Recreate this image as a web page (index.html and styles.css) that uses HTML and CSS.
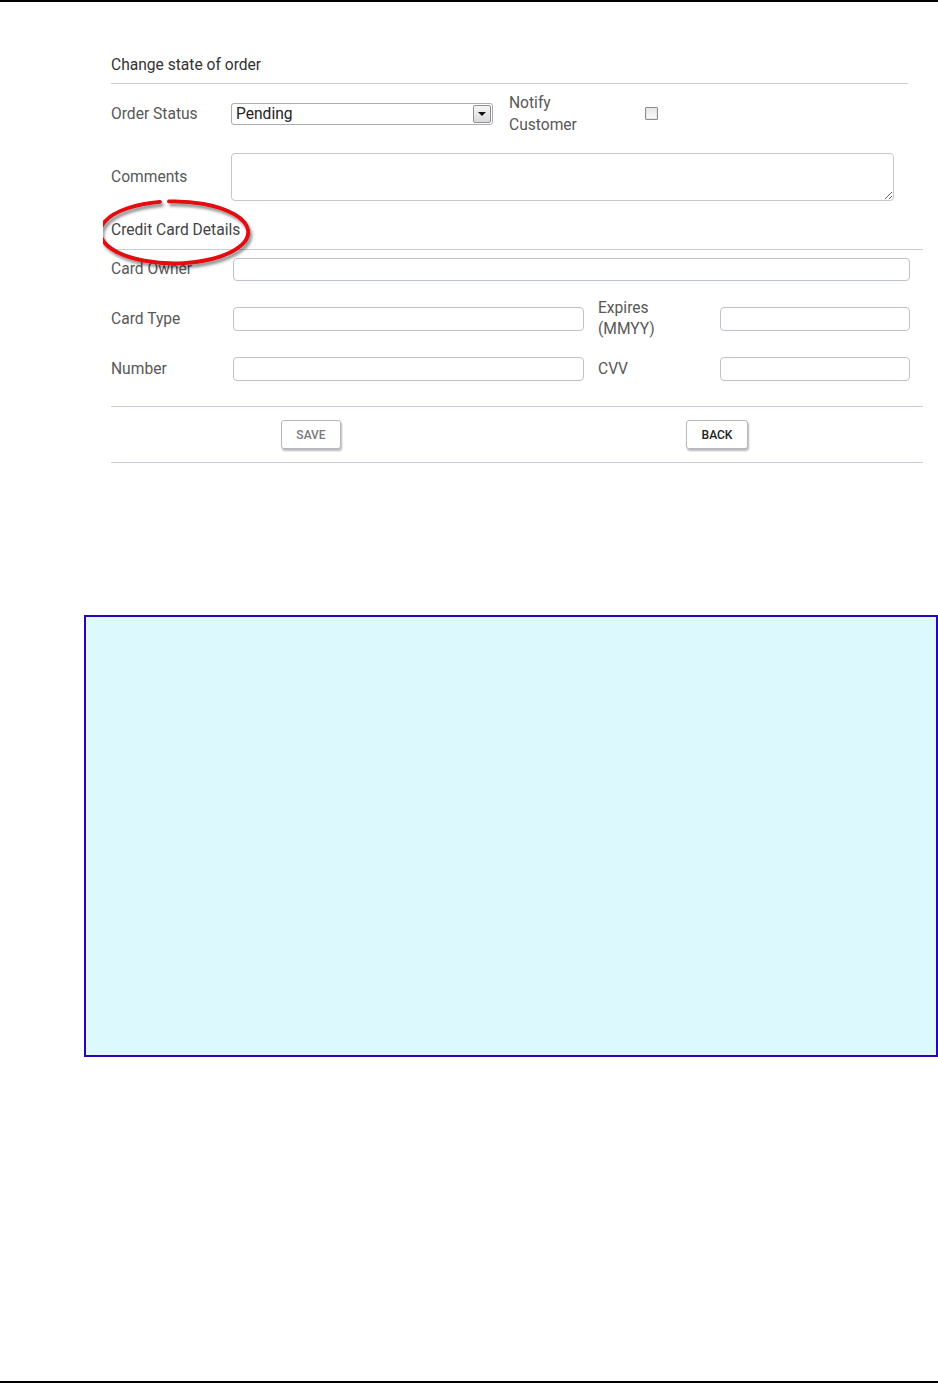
FILE: index.html
```html
<!DOCTYPE html>
<html lang="en">
<head>
  <meta charset="UTF-8">
  <meta name="viewport" content="width=device-width, initial-scale=1.0">
  <title>Change state of order</title>
  <link rel="stylesheet" href="styles.css">
</head>
<body>
  <div class="top-rule"></div>

  <form class="order-form">
    <h2 class="section-title state-title">Change state of order</h2>

    <div class="row status-row">
      <label class="field-label">Order Status</label>
      <div class="select-box">
        <select class="status-select">
          <option>Pending</option>
        </select>
        <span class="select-btn"><span class="select-arrow"></span></span>
      </div>
      <label class="notify-label">Notify<br>Customer</label>
      <input type="checkbox" class="notify-check">
    </div>

    <div class="row comments-row">
      <label class="field-label">Comments</label>
      <textarea class="comments"></textarea>
    </div>

    <div class="card-head">
      <h2 class="section-title card-title">Credit Card Details</h2>
      <!-- red marker circle drawn over the heading -->
      <svg class="marker" width="164" height="80" viewBox="0 0 164 80">
        <defs>
          <filter id="shade" x="-10%" y="-20%" width="125%" height="150%">
            <feDropShadow dx="2" dy="3" stdDeviation="1.8" flood-color="#000" flood-opacity="0.45"/>
          </filter>
        </defs>
        <path d="M 66 6.4 A 74 31 0 1 1 57 6.9" fill="none" stroke="#e3070c" stroke-width="3.8" stroke-linecap="round" filter="url(#shade)"/>
      </svg>
    </div>

    <div class="row owner-row">
      <label class="field-label card-label">Card Owner</label>
      <input type="text" class="text-input owner-input">
    </div>

    <div class="row pair-row type-row">
      <label class="field-label card-label">Card Type</label>
      <input type="text" class="text-input wide-input">
      <label class="field-label side-label">Expires<br>(MMYY)</label>
      <input type="text" class="text-input short-input">
    </div>

    <div class="row pair-row number-row">
      <label class="field-label card-label">Number</label>
      <input type="text" class="text-input wide-input">
      <label class="field-label side-label">CVV</label>
      <input type="text" class="text-input short-input">
    </div>

    <div class="button-bar">
      <div class="button-cell"><button type="button" class="btn btn-save">SAVE</button></div>
      <div class="button-cell"><button type="button" class="btn btn-back">BACK</button></div>
    </div>
  </form>

  <div class="note-box"></div>

  <div class="bottom-rule"></div>
</body>
</html>
```

FILE: styles.css
```css
body {
  margin: 0;
  padding: 0;
  font-family: Roboto, "Liberation Sans", sans-serif;
  background: #fff;
  color: #555;
}
.top-rule {
  height: 2px;
  background: #000;
}
.order-form {
  margin-left: 111px;
  width: 812px;
}
.section-title {
  margin: 0;
  font-size: 15.6px;
  font-weight: 400;
  line-height: 20px;
  color: #333;
  border-bottom: 1px solid #c9ced4;
}
.state-title {
  padding-top: 53px;
  padding-bottom: 8px;
  margin-right: 15px;
}
.row {
  display: flex;
  align-items: center;
}
.field-label {
  font-size: 15.6px;
  line-height: 21px;
  color: #585858;
}
.status-row {
  margin-top: 8px;
  height: 44px;
}
.status-row .field-label,
.comments-row .field-label {
  width: 120px;
}
.select-box {
  display: flex;
  width: 262px;
  height: 22px;
  box-sizing: border-box;
  border: 1px solid #a9adb2;
  border-radius: 3px;
  background: #fff;
  overflow: hidden;
}
.status-select {
  flex: 1;
  appearance: none;
  -webkit-appearance: none;
  border: none;
  background: transparent;
  font-family: inherit;
  font-size: 15.6px;
  color: #222;
  padding: 0 4px;
  outline: none;
}
.select-btn {
  width: 16px;
  margin: 1px;
  border: 1px solid #8c8f93;
  border-radius: 2px;
  background: linear-gradient(#f6f6f6, #d9d9d9);
  display: flex;
  align-items: center;
  justify-content: center;
}
.select-arrow {
  width: 0;
  height: 0;
  border-left: 4px solid transparent;
  border-right: 4px solid transparent;
  border-top: 4px solid #111;
}
.notify-label {
  margin-left: 16px;
  width: 136px;
  font-size: 15.6px;
  line-height: 22px;
  color: #585858;
}
.notify-check {
  appearance: none;
  -webkit-appearance: none;
  margin: 0 0 2px;
  width: 13px;
  height: 13px;
  border: 1px solid #8e8e8e;
  box-shadow: inset 0 0 0 1px #e4e4e4;
  background: linear-gradient(#e8e8e8, #fafafa);
  border-radius: 1px;
}
.comments-row {
  margin-top: 17px;
}
.comments {
  width: 663px;
  height: 48px;
  box-sizing: border-box;
  border: 1px solid #c3c8cf;
  border-radius: 4px;
  font-family: inherit;
  font-size: 14px;
}
.card-head {
  position: relative;
  margin-top: 19px;
}
.card-title {
  padding-bottom: 9px;
  color: #444;
}
.marker {
  position: absolute;
  left: -8px;
  top: -25px;
  pointer-events: none;
}
.card-label {
  width: 122px;
}
.text-input {
  box-sizing: border-box;
  height: 24px;
  border: 1px solid #bdc3cb;
  border-radius: 4px;
  font-family: inherit;
  font-size: 14px;
  padding: 0 6px;
  background: #fff;
}
.owner-row {
  height: 38px;
}
.owner-input {
  width: 677px;
  height: 23px;
}
.pair-row {
  height: 50px;
}
.type-row {
  margin-top: 6px;
}
.wide-input {
  width: 351px;
}
.side-label {
  width: 122px;
  margin-left: 14px;
}
.short-input {
  width: 190px;
}
.button-bar {
  margin-top: 12px;
  display: grid;
  grid-template-columns: 400px 1fr;
  padding: 13px 0;
  border-top: 1px solid #c9ced4;
  border-bottom: 1px solid #c9ced4;
}
.button-cell {
  display: flex;
  justify-content: center;
}
.btn {
  height: 29px;
  padding: 0 13px;
  background: #fff;
  border: 1px solid #b4b9bf;
  border-radius: 3px;
  box-shadow: 1px 2px 2px rgba(0, 0, 0, 0.28);
  font-family: inherit;
  font-size: 12px;
  font-weight: 500;
}
.btn-save {
  color: #7a7a7a;
  width: 60px;
}
.btn-back {
  color: #222;
  width: 62px;
}
.note-box {
  margin: 152px 0 0 84px;
  width: 854px;
  height: 442px;
  box-sizing: border-box;
  border: 2px solid #2e00b8;
  background: #dcfafd;
}
.bottom-rule {
  margin-top: 324px;
  height: 2px;
  background: #000;
}
```
